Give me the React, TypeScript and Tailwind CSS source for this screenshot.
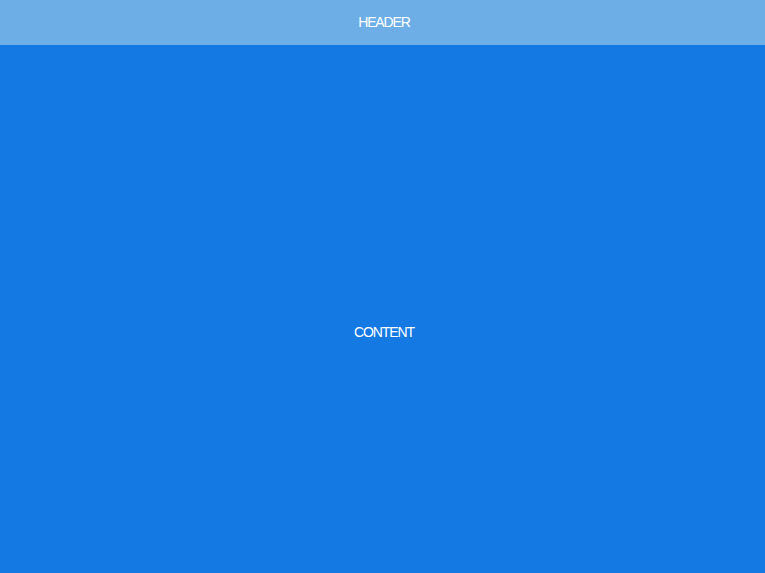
export default function App() {
  return (
    <div className="w-full h-screen overflow-hidden font-['Liberation_Sans',Arial,sans-serif] text-white text-[14px] tracking-[-1.1px]">
      <header className="h-[45px] bg-[#6daee6] flex items-center justify-center pl-[3px]">
        HEADER
      </header>
      <main className="h-[574px] bg-[#1479e2] flex items-center justify-center pl-[3px]">
        CONTENT
      </main>
    </div>
  )
}
